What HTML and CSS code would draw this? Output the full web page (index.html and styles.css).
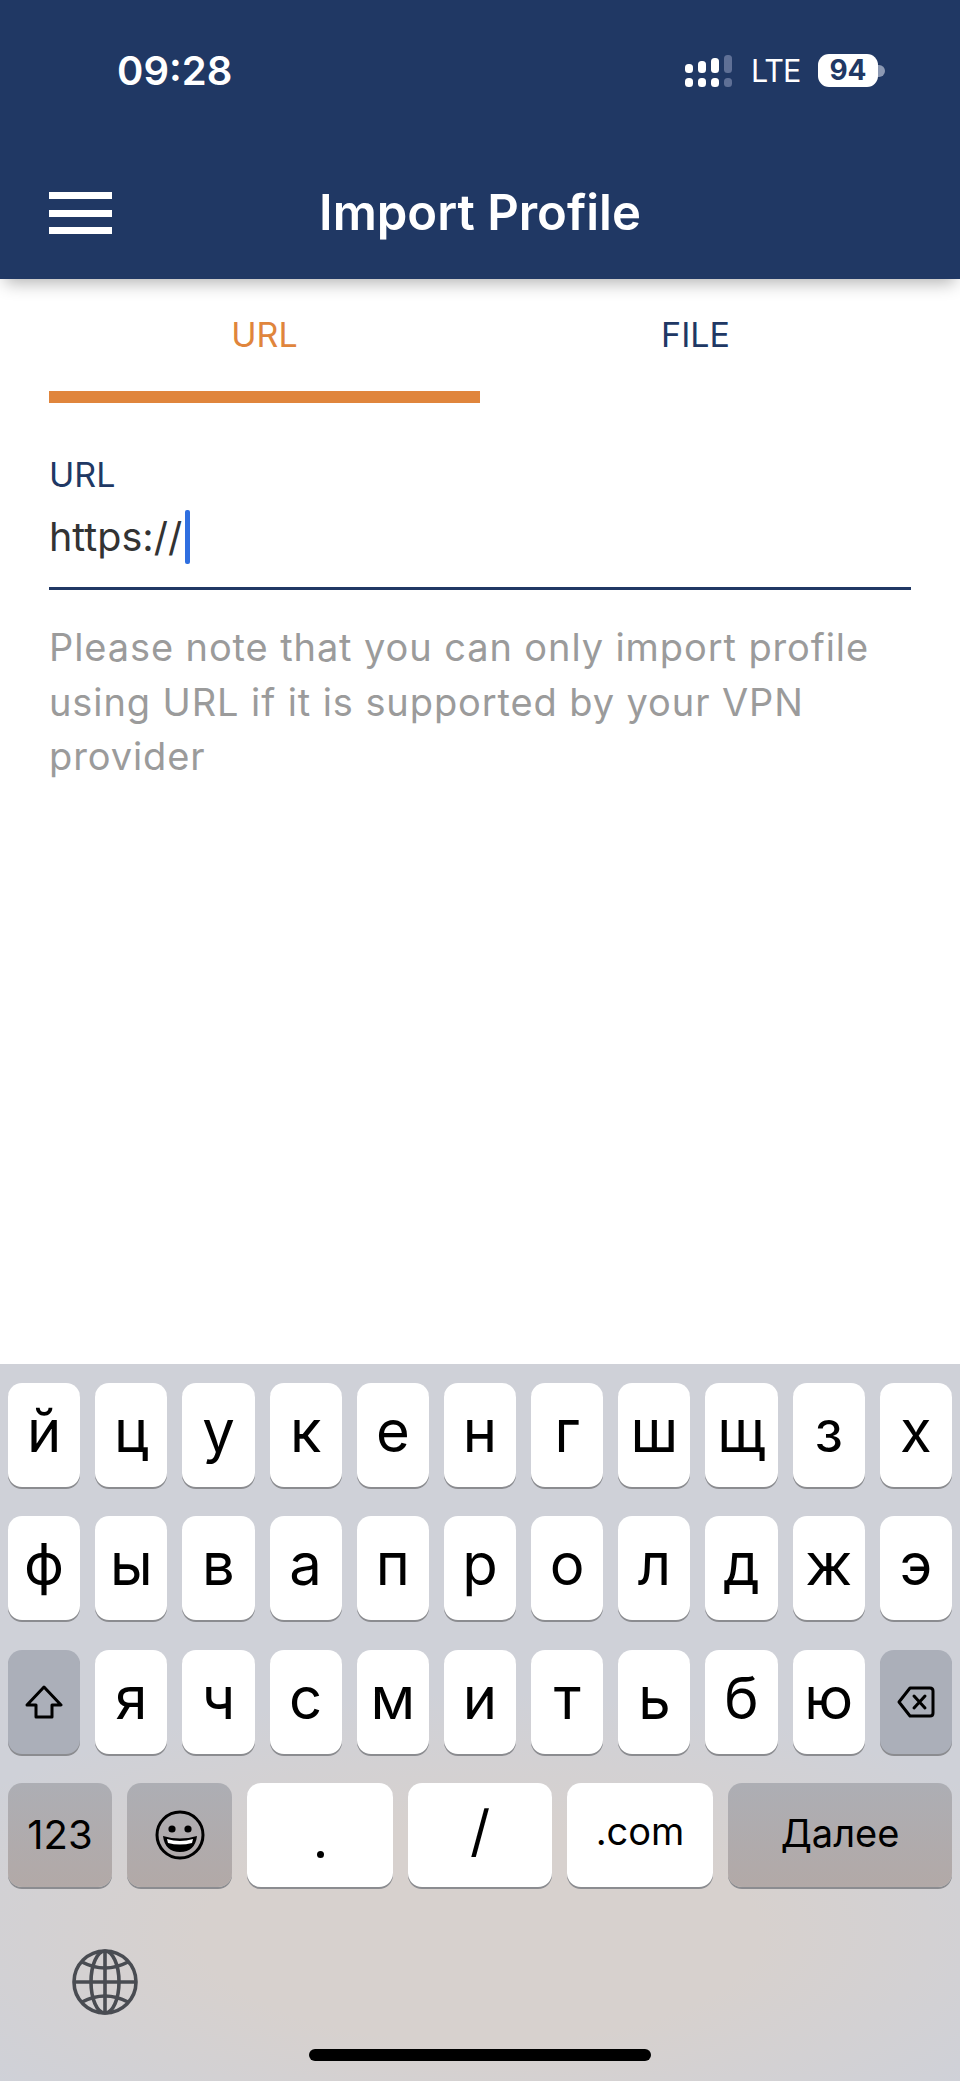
FILE: index.html
```html
<!DOCTYPE html>
<html lang="en">
<head>
    <meta charset="UTF-8">
    <meta name="viewport" content="width=device-width, initial-scale=1.0">
    <title>Import Profile</title>
    <link rel="stylesheet" href="styles.css">
</head>
<body>

<div class="page">
    <header class="header">
        <div class="status-bar">
            <span class="clock">09:28</span>
            <div class="status-right">
                <svg class="signal" width="48" height="32" viewBox="0 0 48 32">
                    <rect x="0" y="9" width="8" height="9" rx="3.5" fill="#fff"/>
                    <rect x="13" y="6" width="8" height="12" rx="3.5" fill="#fff"/>
                    <rect x="26" y="3" width="8" height="15" rx="3.5" fill="#fff"/>
                    <rect x="39" y="0" width="8" height="18" rx="3.5" fill="#5f7096"/>
                    <rect x="0" y="23" width="8" height="9" rx="3.5" fill="#fff"/>
                    <rect x="13" y="23" width="8" height="9" rx="3.5" fill="#fff"/>
                    <rect x="26" y="23" width="8" height="9" rx="3.5" fill="#fff"/>
                    <rect x="39" y="23" width="8" height="9" rx="3.5" fill="#5f7096"/>
                </svg>
                <span class="network">LTE</span>
                <div class="battery">
                    <span class="battery-level">94</span>
                    <span class="battery-tip"></span>
                </div>
            </div>
        </div>
        <div class="title-bar">
            <div class="menu-icon"><span></span><span></span><span></span></div>
            <h1 class="title">Import Profile</h1>
        </div>
    </header>

    <main class="content">
        <div class="tabs">
            <div class="tab tab-active">URL</div>
            <div class="tab">FILE</div>
        </div>
        <div class="field">
            <div class="field-label">URL</div>
            <div class="field-value">https://<span class="caret"></span></div>
        </div>
        <p class="note">Please note that you can only import profile using URL if it is supported by your VPN provider</p>
    </main>

    <div class="keyboard">
        <div class="key-row">
            <div class="key">й</div><div class="key">ц</div><div class="key">у</div><div class="key">к</div><div class="key">е</div><div class="key">н</div><div class="key">г</div><div class="key">ш</div><div class="key">щ</div><div class="key">з</div><div class="key">х</div>
        </div>
        <div class="key-row">
            <div class="key">ф</div><div class="key">ы</div><div class="key">в</div><div class="key">а</div><div class="key">п</div><div class="key">р</div><div class="key">о</div><div class="key">л</div><div class="key">д</div><div class="key">ж</div><div class="key">э</div>
        </div>
        <div class="key-row">
            <div class="key key-dark">
                <svg width="38" height="34" viewBox="0 0 38 34" fill="none" stroke="#000" stroke-width="3" stroke-linejoin="round">
                    <path d="M19 2 L36 20 H27 V32 H11 V20 H2 Z"/>
                </svg>
            </div>
            <div class="key">я</div><div class="key">ч</div><div class="key">с</div><div class="key">м</div><div class="key">и</div><div class="key">т</div><div class="key">ь</div><div class="key">б</div><div class="key">ю</div>
            <div class="key key-dark">
                <svg width="38" height="32" viewBox="0 0 38 32" fill="none" stroke="#000" stroke-width="3" stroke-linejoin="round" stroke-linecap="round">
                    <path d="M13 2 H33 Q36 2 36 5 V27 Q36 30 33 30 H13 L2 16 Z"/>
                    <path d="M17 10 L28 22 M28 10 L17 22"/>
                </svg>
            </div>
        </div>
        <div class="key-row key-row-bottom">
            <div class="key key-dark key-warm key-num">123</div>
            <div class="key key-dark key-warm key-emoji">
                <svg width="50" height="50" viewBox="0 0 50 50">
                    <circle cx="25" cy="25" r="23" fill="none" stroke="#000" stroke-width="3"/>
                    <circle cx="17" cy="19" r="3.6" fill="#000"/>
                    <circle cx="33" cy="19" r="3.6" fill="#000"/>
                    <path d="M8 26 Q25 31 42 26 Q40 42 25 42 Q10 42 8 26 Z" fill="#000"/>
                    <path d="M12 29 Q25 33 38 29 L37 33 Q25 36 13 33 Z" fill="#fff"/>
                </svg>
            </div>
            <div class="key key-dot"><span class="dot"></span></div>
            <div class="key key-slash">/</div>
            <div class="key key-small key-com">.com</div>
            <div class="key key-dark key-warm key-small key-next">Далее</div>
        </div>
        <div class="globe-row">
            <svg width="66" height="66" viewBox="0 0 66 66" fill="none" stroke="#494c52" stroke-width="3.6">
                <circle cx="33" cy="33" r="31"/>
                <ellipse cx="33" cy="33" rx="14" ry="31"/>
                <path d="M33 2 V64 M2 33 H64"/>
                <path d="M10 13 Q33 25 56 13 M10 53 Q33 41 56 53"/>
            </svg>
        </div>
        <div class="home-bar"></div>
    </div>
</div>

</body>
</html>
```

FILE: styles.css
```css
/* Basic styling */
* {
    box-sizing: border-box;
}
body {
    margin: 0;
    background: #fff;
    font-family: Inter, "Noto Sans", sans-serif;
}
.page {
    width: 960px;
    height: 2081px;
    display: flex;
    flex-direction: column;
    overflow: hidden;
}

/* Header */
.header {
    position: relative;
    z-index: 2;
    height: 279px;
    background: #203864;
    color: #fff;
    box-shadow: 0 9px 16px -5px rgba(0, 0, 0, 0.3);
}
.status-bar {
    height: 142px;
    padding: 54px 75px 0 117px;
    display: flex;
    justify-content: space-between;
    align-items: flex-start;
}
.clock {
    font-size: 40px;
    line-height: 33px;
    font-weight: 600;
}
.status-right {
    display: flex;
    align-items: center;
    height: 33px;
}
.signal {
    margin-right: 18px;
}
.network {
    font-size: 30.5px;
    line-height: 33px;
    margin-right: 19px;
    width: 48px;
    letter-spacing: -1px;
}
.battery {
    display: flex;
    align-items: center;
}
.battery-level {
    width: 60px;
    height: 33px;
    border-radius: 11px;
    background: #fff;
    color: #203864;
    font-size: 28px;
    line-height: 33px;
    font-weight: 700;
    text-align: center;
}
.battery-tip {
    width: 7px;
    height: 12px;
    background: #8c99b3;
    border-radius: 0 6px 6px 0;
}
.title-bar {
    position: relative;
    height: 137px;
    display: flex;
    align-items: flex-start;
    justify-content: center;
}
.menu-icon {
    position: absolute;
    left: 49px;
    top: 50px;
    width: 63px;
    height: 42px;
    display: flex;
    flex-direction: column;
    justify-content: space-between;
}
.menu-icon span {
    height: 7px;
    background: #fff;
}
.title {
    margin: 43px 0 0;
    font-size: 49px;
    line-height: 56px;
    font-weight: 600;
}

/* Tabs and form */
.content {
    flex: 1;
    padding: 0 49px;
}
.tabs {
    display: grid;
    grid-template-columns: 1fr 1fr;
}
.tab {
    height: 124px;
    padding-top: 38px;
    font-size: 34px;
    line-height: 36px;
    text-align: center;
    color: #203864;
}
.tab-active {
    color: #e0853c;
    border-bottom: 12px solid #e0853c;
}
.field {
    margin-top: 54px;
    height: 133px;
    border-bottom: 3px solid #203864;
}
.field-label {
    font-size: 34px;
    line-height: 36px;
    color: #203864;
}
.field-value {
    display: flex;
    align-items: center;
    margin-top: 17px;
    font-size: 39.5px;
    line-height: 54px;
    color: #333;
}
.caret {
    width: 5px;
    height: 54px;
    margin-left: 3px;
    background: #2f6fe0;
    border-radius: 2px;
}
.note {
    margin: 30px 0 0;
    font-size: 38px;
    line-height: 54.5px;
    letter-spacing: 0.9px;
    color: #9b9b9b;
}

/* Keyboard */
.keyboard {
    position: relative;
    height: 717px;
    padding: 19px 8px 0;
    background:
        radial-gradient(ellipse 620px 240px at 50% 570px, #d7d1ce 45%, rgba(215, 209, 206, 0) 100%),
        #cfd1d8;
}
.key-row {
    display: grid;
    grid-template-columns: repeat(11, 1fr);
    gap: 15px;
    height: 104px;
    margin-bottom: 29.4px;
}
.key-row-bottom {
    display: flex;
    margin-bottom: 0;
}
.key {
    display: flex;
    align-items: center;
    justify-content: center;
    background: #fff;
    border-radius: 14px;
    box-shadow: 0 2px 0 #8b8c90;
    color: #000;
    font-size: 58px;
    line-height: 1;
    padding-bottom: 8px;
}
.key-dark {
    background: #abafb9;
    padding-bottom: 0;
}
.key-warm {
    background: linear-gradient(#adaeb4, #b2a9a7);
}
.key-small {
    font-size: 38px;
}
.key-num {
    width: 104px;
    font-size: 40px;
}
.key-emoji {
    width: 105px;
}
.key-dot {
    width: 146px;
    align-items: flex-end;
    padding-bottom: 29px;
}
.dot {
    width: 7px;
    height: 7px;
    border-radius: 50%;
    background: #000;
}
.key-slash {
    width: 144px;
    font-size: 56px;
}
.key-com {
    width: 146px;
}
.key-next {
    width: 224px;
    padding-bottom: 4px;
}
.globe-row {
    margin: 62px 0 0 64px;
}
.home-bar {
    position: absolute;
    left: 309px;
    top: 685px;
    width: 342px;
    height: 12px;
    border-radius: 6px;
    background: #000;
}
```
